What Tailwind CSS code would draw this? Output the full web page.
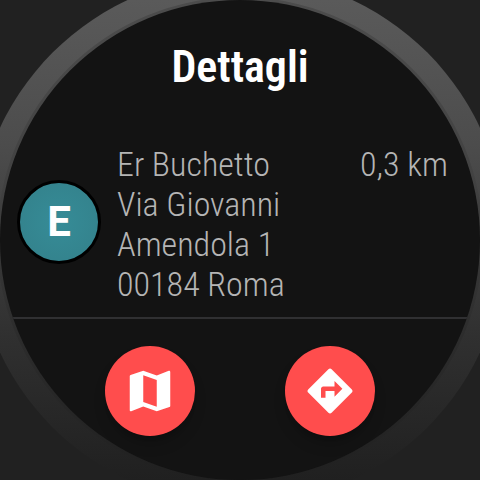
<!DOCTYPE html>
<html lang="it">
<head>
<meta charset="utf-8">
<meta name="viewport" content="width=device-width, initial-scale=1">
<title>Dettagli</title>
<script src="https://cdn.jsdelivr.net/npm/@tailwindcss/browser@4"></script>
</head>
<body class="bg-[#212121] font-['Roboto_Condensed',Roboto,sans-serif]">
<div class="relative mx-auto aspect-square w-full max-w-[100vh] overflow-hidden">
  <!-- watch bezel -->
  <svg class="absolute inset-0 size-full" viewBox="0 0 480 480" aria-hidden="true">
    <defs>
      <linearGradient id="bezel" x1="0" y1="0" x2="0" y2="480" gradientUnits="userSpaceOnUse">
        <stop offset="0" stop-color="#5a5a5a"/>
        <stop offset="0.3" stop-color="#4c4c4c"/>
        <stop offset="0.7" stop-color="#303030"/>
        <stop offset="1" stop-color="#202020"/>
      </linearGradient>
      <linearGradient id="lip" x1="0" y1="0" x2="0" y2="480" gradientUnits="userSpaceOnUse">
        <stop offset="0" stop-color="#4c4c4c"/>
        <stop offset="0.4" stop-color="#414141"/>
        <stop offset="0.7" stop-color="#2c2c2c"/>
        <stop offset="1" stop-color="#202020"/>
      </linearGradient>
    </defs>
    <circle cx="240" cy="240" r="265" fill="url(#bezel)"/>
    <circle cx="240" cy="240" r="243" fill="url(#lip)"/>
  </svg>
  <main class="relative flex size-full flex-col overflow-hidden rounded-full bg-[#131313]">
    <h1 class="pt-[41px] text-center text-[44px] leading-[52px] font-semibold text-white">Dettagli</h1>
    <section class="mt-[51px] flex items-start gap-4 border-b-2 border-[#303032] pr-8 pb-[13px] pl-[17px] text-[34px] leading-10 font-light text-[#b5b5b5]">
      <div class="mt-9 flex size-[84px] shrink-0 items-center justify-center rounded-full border-3 border-black bg-radial from-[#368c97] to-[#33808a] font-['Roboto',sans-serif] text-[42px] leading-none font-bold text-white">E</div>
      <address class="flex-1 not-italic">Er Buchetto<br>Via Giovanni<br>Amendola 1<br>00184 Roma</address>
      <p>0,3 km</p>
    </section>
    <nav class="mt-[27px] flex justify-center gap-[90px]">
      <button type="button" aria-label="Mappa" class="flex size-[90px] items-center justify-center rounded-full bg-[#ff4d4d] shadow-lg shadow-black/20">
        <svg class="size-[54px]" viewBox="0 0 24 24" aria-hidden="true"><path fill="#fff" d="M20.500 3l-.16.030L15 5.100 9 3 3.360 4.900c-.21.070-.36.250-.36.480V20.500c0 .280.220.500.500.500l.160-.030L9 18.900l6 2.100 5.640-1.900c.210-.070.360-.250.360-.480V3.500c0-.280-.220-.500-.500-.500zM15 19l-6-2.110V5l6 2.110V19z"/></svg>
      </button>
      <button type="button" aria-label="Indicazioni" class="flex size-[90px] items-center justify-center rounded-full bg-[#ff4d4d] shadow-lg shadow-black/20">
        <svg class="size-[54px]" viewBox="0 0 24 24" aria-hidden="true"><path fill="#fff" d="M21.710 11.290l-9-9c-.390-.390-1.020-.390-1.410 0l-9 9c-.390.390-.390 1.020 0 1.410l9 9c.390.390 1.020.390 1.410 0l9-9c.390-.380.390-1.010 0-1.410zM14 14.500V12h-4v3H8v-4c0-.550.450-1 1-1h5V7.500l3.500 3.500-3.500 3.500z"/></svg>
      </button>
    </nav>
  </main>
</div>
</body>
</html>
